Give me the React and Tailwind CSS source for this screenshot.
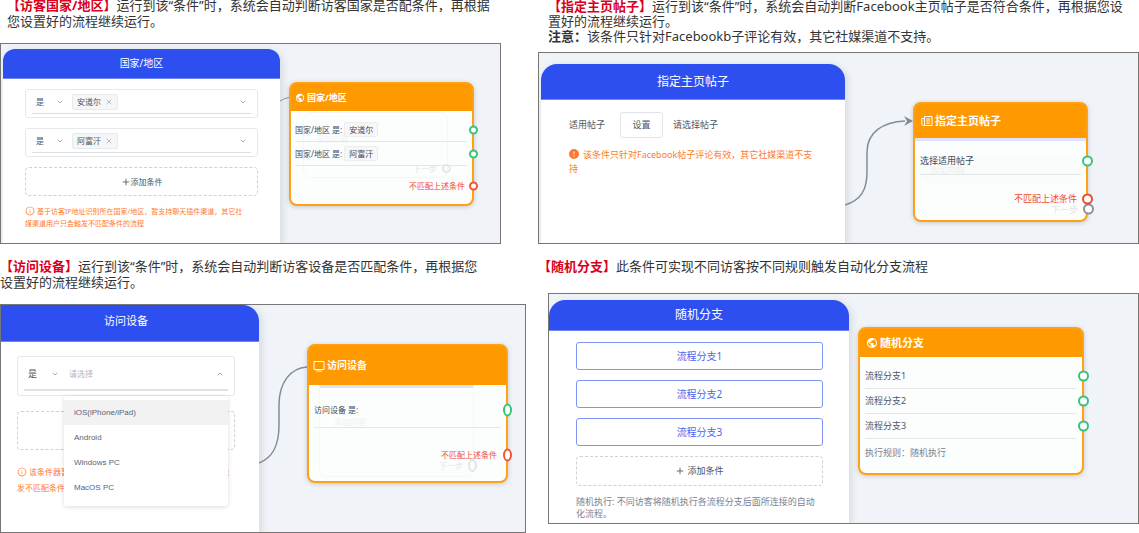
import { FiX, FiPlus, FiChevronDown, FiChevronUp } from 'react-icons/fi';
import { MdPublic } from 'react-icons/md';
import { AiOutlineInfoCircle } from 'react-icons/ai';
import { BsExclamationCircleFill } from 'react-icons/bs';

function Intro({ title, className, children }) {
  return (
    <p className={`text-[13px] text-[#333] whitespace-nowrap ${className}`}>
      {title && <strong className="font-bold text-[#d9001b]">{title}</strong>}
      {children}
    </p>
  );
}

// Blue-headed settings panel on the left of every canvas
function Drawer({ title, className, headClass, children }) {
  return (
    <section className={`bg-white overflow-hidden shadow-[2px_2px_8px_rgba(0,0,0,0.12)] ${className}`}>
      <h2 className={`flex items-center justify-center bg-[#2d4ff0] text-white border-b border-[#6f86f6] ${headClass}`}>
        {title}
      </h2>
      {children}
    </section>
  );
}

function NodeCard({ icon, title, className, headClass, children }) {
  return (
    <section className={`relative self-start bg-[#fcfefe] border-2 border-[#ffa114] shadow-[0_1px_5px_rgba(0,0,0,0.18)] ${className}`}>
      <h3 className={`flex items-center bg-[#ff9900] text-white font-bold ${headClass}`}>
        {icon}
        {title}
      </h3>
      {children}
    </section>
  );
}

function Port({ className }) {
  return <span className={`absolute top-1/2 -translate-y-1/2 border-2 bg-white ${className}`}></span>;
}

function IsSelect({ className }) {
  return (
    <label className={`flex items-center justify-between ${className}`}>
      <select aria-label="条件" className="appearance-none bg-transparent text-[#4b5563] outline-none">
        <option>是</option>
        <option>不是</option>
      </select>
      <FiChevronDown className="w-2 h-2 text-[#7b8290]" />
    </label>
  );
}

function CountryRow({ name }) {
  return (
    <div className="h-[29px] px-1.5 pt-px border border-[#e6e8ec] rounded-[3px]">
      <div className="flex items-center h-[23px] border-b border-[#dcdee2]">
        <IsSelect className="w-8 pl-1 text-[8px]" />
        <span className="flex items-center gap-1 h-4 ml-2 px-1 bg-[#f5f6f7] border border-[#e9eaec] rounded-[2px] text-[8px] text-[#4b5563]">
          {name}
          <button aria-label={`移除${name}`}>
            <FiX className="w-2 h-2 text-[#9aa0aa]" />
          </button>
        </span>
        <button aria-label="展开" className="ml-auto mr-1">
          <FiChevronDown className="w-2 h-2 text-[#7b8290]" />
        </button>
      </div>
    </div>
  );
}

function AddButton({ className, iconClass }) {
  return (
    <button className={`flex items-center justify-center w-full border border-dashed border-[#cfd1d5] rounded-[4px] text-[#4b5563] ${className}`}>
      <FiPlus className={iconClass} />
      添加条件
    </button>
  );
}

function PostIcon() {
  return (
    <svg viewBox="0 0 12 12" className="w-3 h-3 mr-0.5" fill="none" stroke="currentColor">
      <path d="M3.5 1.5h7.5v9H2.2L.8 9.5V3.5h2.2M3.5 1.5v9M5.2 4h4M5.2 6h4M5.2 8.2h4" />
    </svg>
  );
}

function ScreenIcon() {
  return (
    <svg viewBox="0 0 12 12" className="w-3 h-3 mr-0.5" fill="none" stroke="currentColor">
      <path d="M1 1.5h10v8H1zM3 11h6" />
    </svg>
  );
}

function CountryPanel() {
  const countries = ['安道尔', '阿富汗'];
  return (
    <div className="grid grid-cols-[277fr_9fr_185fr_26fr] mt-3.5 mr-[25px] pl-0.5 overflow-hidden bg-[#f0f4f8] border border-[#767676]">
      <Drawer title="国家/地区" className="mt-[5px] rounded-t-xl" headClass="h-[30px] text-[10px]">
        <div className="flex flex-col gap-2.5 pt-2.5 px-[22px] pb-[13px]">
          {countries.map((name) => (
            <CountryRow key={name} name={name} />
          ))}
          <AddButton className="h-[29px] text-[8px]" iconClass="w-2.5 h-2.5" />
          <p className="text-[7px] leading-[12px] text-[#ff7a2e]">
            <AiOutlineInfoCircle className="inline w-2.5 h-2.5 mr-0.5 align-[-2px]" />
            基于访客IP地址识别所在国家/地区，暂支持聊天插件渠道，其它社
            <br />
            媒渠道用户只会触发不匹配条件的流程
          </p>
        </div>
      </Drawer>
      <svg viewBox="0 0 9 10" preserveAspectRatio="none" className="w-full h-2.5 mt-[50px]" fill="none" stroke="#8b8f9f">
        <path d="M0 7 Q5 4 9 3.5" />
      </svg>
      <NodeCard
        icon={<MdPublic className="w-2.5 h-2.5 mr-0.5" />}
        title="国家/地区"
        className="mt-[38px] rounded-lg"
        headClass="h-[27px] pl-1 rounded-t-[5px] text-[9px]"
      >
        <div className="absolute left-3 right-6 top-7 h-[66px] border border-[#f5f6f8] rounded-lg text-[8px] text-[#f0f1f2]">
          <span className="absolute left-3 top-5">添加内容</span>
          <span className="absolute right-2.5 bottom-0.5 text-[#e4e5e8]">下一步</span>
          <span className="absolute -right-1 bottom-1 w-[9px] h-[9px] border-2 border-[#e6e7ec] rounded-full"></span>
        </div>
        <div className="relative pt-[7px] pb-1.5 pl-1 pr-[5px] text-[8px] text-[#3f4a59]">
          {countries.map((name) => (
            <div key={name} className="relative flex items-center h-6 border-b border-[#e4e6e8]">
              国家/地区 是:
              <span className="flex items-center h-[15px] ml-0.5 px-1 bg-[#f6f7f8] border border-[#eceded] rounded-[2px]">{name}</span>
              <Port className="-right-[11px] w-[9px] h-[9px] rounded-full border-[#35c47c]" />
            </div>
          ))}
          <div className="relative flex items-center justify-end h-6 mt-2 pr-0.5 text-[#f04a2c]">
            不匹配上述条件
            <Port className="-right-[11px] w-[9px] h-[9px] rounded-full border-[#f0563a]" />
          </div>
        </div>
      </NodeCard>
    </div>
  );
}

function PostPanel() {
  return (
    <div className="grid grid-cols-[304fr_68fr_175fr_50fr] mt-2 pl-0.5 overflow-hidden bg-[#f0f4f8] border border-[#767676]">
      <Drawer title="指定主页帖子" className="mt-[11px] rounded-t-2xl" headClass="h-9 text-[12px]">
        <div className="pt-3 pl-7 pb-[67px] text-[9px]">
          <div className="flex items-center text-[#4b5563]">
            适用帖子
            <button className="w-[43px] h-[26px] ml-[15px] mr-2.5 border border-[#e2e4e8] rounded-[3px]">设置</button>
            请选择帖子
          </div>
          <p className="mt-2.5 leading-[14px] text-[#ff7a2e]">
            <BsExclamationCircleFill className="inline w-2.5 h-2.5 mr-1 align-[-1px]" />
            该条件只针对Facebook帖子评论有效，其它社媒渠道不支
            <br />持
          </p>
        </div>
      </Drawer>
      <svg viewBox="0 0 68 100" preserveAspectRatio="none" className="w-full h-[100px] mt-[57px]">
        <path d="M0 95 C16 90 22 80 22 62 V42 C22 22 38 12 60 11" fill="none" stroke="#858a9b" strokeWidth="1.5" />
        <path d="M59 6 L68 11 L59 16 L62 11 Z" fill="#858a9b" />
      </svg>
      <NodeCard
        icon={<PostIcon />}
        title="指定主页帖子"
        className="mt-[49px] rounded-lg"
        headClass="h-[34px] pl-1.5 rounded-t-[5px] text-[11px]"
      >
        <div className="h-[3px] bg-[#dde2fa]"></div>
        <div className="absolute inset-x-1 top-[52px] h-7 rounded-xl bg-[#fafbfb] pl-2.5 pt-2 text-[9px] text-[#eeeff0]">添加内容</div>
        <div className="absolute right-2 bottom-1 text-[9px] text-[#e3e4e7]">
          下一步
          <Port className="-right-4 w-[11px] h-[11px] rounded-full border-[#8b8f9f]" />
        </div>
        <div className="relative pt-1.5 pb-[9px] pl-[5px] pr-[5px] text-[9px] text-[#3f4a59]">
          <div className="relative flex items-center h-7 border-b border-[#e4e6e8]">
            选择适用帖子
            <Port className="-right-3 w-[11px] h-[11px] rounded-full border-[#35c47c]" />
          </div>
          <div className="relative flex items-center justify-end h-6 mt-3 pr-1 text-[#f04a2c]">
            不匹配上述条件
            <Port className="-right-3 w-[11px] h-[11px] rounded-full border-[#f04a2c]" />
          </div>
        </div>
      </NodeCard>
    </div>
  );
}

function DevicePanel() {
  const devices = ['iOS(iPhone/iPad)', 'Android', 'Windows PC', 'MacOS PC'];
  return (
    <div className="grid grid-cols-[258fr_48fr_201fr_17fr] mt-3.5 overflow-hidden bg-[#f0f4f8] border border-[#767676]">
      <Drawer title="访问设备" className="rounded-tr-2xl" headClass="h-[37px] pb-1 pr-2 text-[11px]">
        <div className="relative pt-3.5 pl-4 pr-6 pb-9">
          <div className="h-10 px-1.5 pt-px border border-[#e6e8ec] rounded-[3px]">
            <div className="flex items-center h-[33px] border-b-2 border-[#dfe1e8]">
              <IsSelect className="w-[35px] pl-1 text-[9px]" />
              <input
                aria-label="设备"
                placeholder="请选择"
                className="flex-1 min-w-0 ml-2.5 text-[8px] placeholder:text-[#b4b7bf] outline-none"
              />
              <FiChevronUp className="w-2 h-2 mr-1 text-[#7b8290]" />
            </div>
          </div>
          <AddButton className="h-[39px] mt-[15px] text-[9px]" iconClass="w-2 h-2 mr-0.5" />
          <p className="mt-3.5 text-[8px] leading-[16px] text-[#ff7a2e] whitespace-nowrap">
            <AiOutlineInfoCircle className="inline w-2.5 h-2.5 mr-0.5 align-[-2px]" />
            该条件器暂支持聊天插件渠道，其它社媒渠道用户只会触
            <br />
            发不匹配条件的流程
          </p>
          <ul
            role="listbox"
            aria-label="设备"
            className="absolute left-[63px] right-[31px] top-[54px] pt-1 pb-1.5 bg-white rounded-[3px] shadow-[0_1px_5px_rgba(0,0,0,0.14)] font-['Liberation_Sans',sans-serif] text-[8px] text-[#5d6372]"
          >
            {devices.map((device, i) => (
              <li
                key={device}
                role="option"
                aria-selected={i === 0}
                className={`flex items-center h-[25px] pl-2.5 ${i === 0 ? 'bg-[#f2f2f2]' : ''}`}
              >
                {device}
              </li>
            ))}
          </ul>
        </div>
      </Drawer>
      <svg viewBox="0 0 48 110" preserveAspectRatio="none" className="w-full h-[110px] mt-[55px]" fill="none" stroke="#858a9b" strokeWidth="1.5">
        <path d="M0 103 C13 98 20 87 20 65 V45 C20 23 31 8 48 7" />
      </svg>
      <NodeCard
        icon={<ScreenIcon />}
        title="访问设备"
        className="mt-[39px] rounded-lg"
        headClass="h-[39px] pl-1 rounded-t-[5px] text-[10px]"
      >
        <div className="absolute left-2.5 right-8 top-[39px] h-[92px] border border-[#f6f7f8] border-t-[3px] border-t-[#dde2fa] rounded-b-lg text-[8px] text-[#eeeff0]">
          <span className="absolute left-3.5 top-7">添加内容</span>
          <span className="absolute right-2.5 bottom-1 text-[#e3e4e7]">下一步</span>
          <span className="absolute -right-1 bottom-1 w-[9px] h-[13px] border-2 border-[#e3e4e9] rounded-[50%]"></span>
        </div>
        <div className="relative pt-2 pb-3.5 pl-[5px] pr-[5px] text-[8px] text-[#3f4a59]">
          <div className="relative flex items-center h-[35px] border-b border-[#e4e6e8]">
            访问设备 是:
            <Port className="-right-[11px] w-[9px] h-[13px] rounded-[50%] border-[#35c47c]" />
          </div>
          <div className="relative flex items-center justify-end h-6 mt-[15px] pr-1 text-[#f04a2c]">
            不匹配上述条件
            <Port className="-right-[11px] w-[9px] h-[13px] rounded-[50%] border-[#f0563a]" />
          </div>
        </div>
      </NodeCard>
    </div>
  );
}

function RandomPanel() {
  const branches = ['流程分支1', '流程分支2', '流程分支3'];
  return (
    <div className="grid grid-cols-[300fr_9fr_226fr_54fr] mt-[19px] ml-2.5 overflow-hidden bg-[#f0f4f8] border border-[#767676]">
      <Drawer title="随机分支" className="mt-1.5 rounded-t-2xl" headClass="h-[31px] text-[12px]">
        <div className="flex flex-col gap-2.5 pt-[11px] pl-[27px] pr-[26px] pb-[3px]">
          {branches.map((branch) => (
            <button key={branch} className="h-7 border border-[#7f95f5] rounded-[3px] text-[10px] text-[#4a66f0]">
              {branch}
            </button>
          ))}
          <AddButton className="h-[30px] text-[9px]" iconClass="w-2.5 h-2.5 mr-0.5" />
          <p className="text-[9px] leading-[12px] text-[#7b8290] whitespace-nowrap">
            随机执行: 不同访客将随机执行各流程分支后面所连接的自动
            <br />
            化流程。
          </p>
        </div>
      </Drawer>
      <NodeCard
        icon={<MdPublic className="w-3 h-3 mr-0.5" />}
        title="随机分支"
        className="col-start-3 mt-[33px] rounded-lg"
        headClass="h-7 pl-1.5 rounded-t-[5px] text-[11px]"
      >
        <div className="pt-[7px] pb-1.5 pl-[5px] pr-1.5 text-[9px] text-[#4b5563]">
          {branches.map((branch) => (
            <div key={branch} className="relative flex items-center h-[25px] border-b border-[#e4e6e8]">
              {branch}
              <Port className="-right-[13px] w-[11px] h-[11px] rounded-full border-[#35c47c]" />
            </div>
          ))}
          <div className="flex items-center h-7 text-[#7b8290]">执行规则：随机执行</div>
        </div>
      </NodeCard>
    </div>
  );
}

export default function App() {
  return (
    <main lang="zh-CN" className="grid grid-cols-[526fr_601fr] gap-3 bg-white font-['Noto_Sans','Noto_Sans_CJK_SC',sans-serif]">
      <div>
        <Intro title="【访客国家/地区】" className="-mt-[3px] ml-[7px] leading-[16px]">
          运行到该“条件”时，系统会自动判断访客国家是否配条件，再根据
          <br />
          您设置好的流程继续运行。
        </Intro>
        <CountryPanel />
        <Intro title="【访问设备】" className="mt-3.5 leading-[16px]">
          运行到该“条件”时，系统会自动判断访客设备是否匹配条件，再根据您
          <br />
          设置好的流程继续运行。
        </Intro>
        <DevicePanel />
      </div>

      <div>
        <Intro title="【指定主页帖子】" className="-mt-px ml-2.5 leading-[15px]">
          运行到该“条件”时，系统会自动判断Facebook主页帖子是否符合条件，再根据您设
          <br />
          置好的流程继续运行。
          <br />
          <strong className="font-bold">注意：</strong>
          该条件只针对Facebookb子评论有效，其它社媒渠道不支持。
        </Intro>
        <PostPanel />
        <Intro title="【随机分支】" className="mt-3.5 leading-[16px]">
          此条件可实现不同访客按不同规则触发自动化分支流程
        </Intro>
        <RandomPanel />
      </div>
    </main>
  );
}
